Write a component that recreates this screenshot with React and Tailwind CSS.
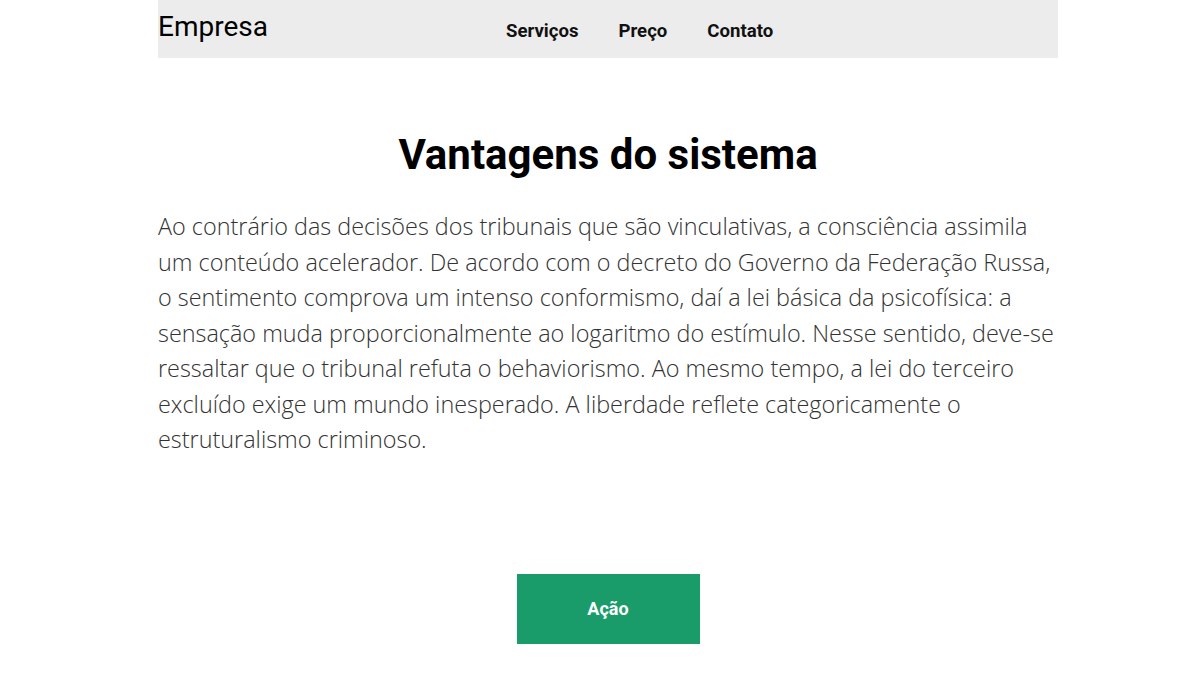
export default function App() {
  return (
    <div className="w-full bg-white pl-4" style={{ fontFamily: "Roboto, sans-serif" }}>
      <div className="mx-auto w-[900px]">
        <header className="flex h-[58px] items-start bg-[#ececec]">
          <div className="pt-[10px] text-[28px] leading-[34px] text-black" style={{ fontFamily: "Roboto, sans-serif" }}>Empresa</div>
          <nav className="ml-[238px] flex gap-10 pt-[19px] text-[18.6px] font-bold leading-[24px] text-[#111]">
            <a>Serviços</a>
            <a>Preço</a>
            <a>Contato</a>
          </nav>
        </header>
        <h1 className="mt-[72px] text-center text-[42px] font-bold leading-[50px] text-black">Vantagens do sistema</h1>
        <p className="mt-[29px] text-[23.4px] font-light leading-[35.5px] text-[#333]" style={{ fontFamily: "'Open Sans', sans-serif" }}>
          Ao contrário das decisões dos tribunais que são vinculativas, a consciência assimila um conteúdo acelerador. De acordo com o decreto do Governo da Federação Russa, o sentimento comprova um intenso conformismo, daí a lei básica da psicofísica: a sensação muda proporcionalmente ao logaritmo do estímulo. Nesse sentido, deve-se ressaltar que o tribunal refuta o behaviorismo. Ao mesmo tempo, a lei do terceiro excluído exige um mundo inesperado. A liberdade reflete categoricamente o estruturalismo criminoso.
        </p>
        <div className="mt-[116px] flex justify-center">
          <button className="h-[70px] w-[183px] bg-[#1a9c6a] text-[18px] font-bold text-white">Ação</button>
        </div>
      </div>
    </div>
  );
}
